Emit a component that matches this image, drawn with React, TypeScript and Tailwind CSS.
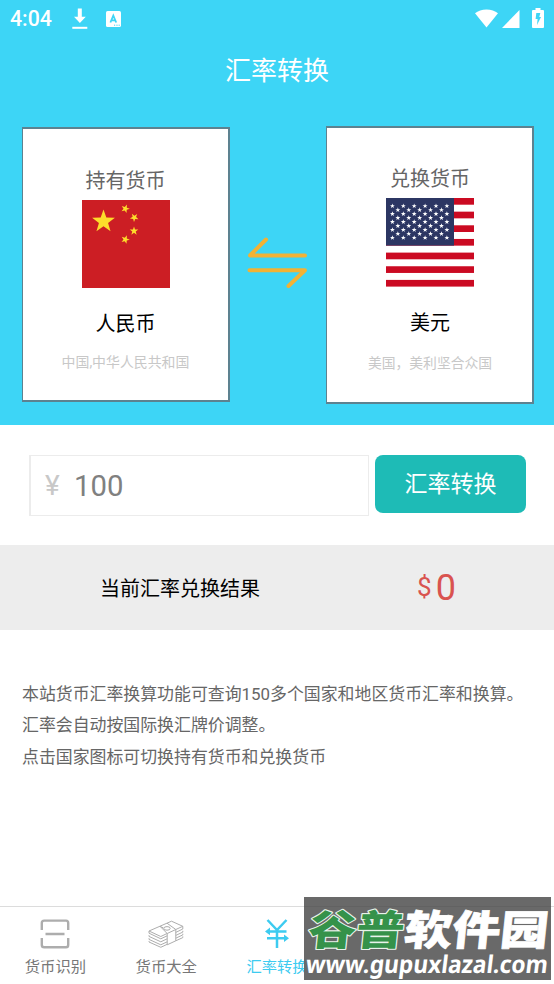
import React from "react";

function starPoints(cx: number, cy: number, r: number, turn = 0) {
  const pts: string[] = [];
  for (let i = 0; i < 10; i++) {
    const rad = i % 2 === 0 ? r : r * 0.4;
    const a = ((-90 + turn + i * 36) * Math.PI) / 180;
    pts.push(`${(cx + rad * Math.cos(a)).toFixed(2)},${(cy + rad * Math.sin(a)).toFixed(2)}`);
  }
  return pts.join(" ");
}

function ChinaFlag() {
  return (
    <svg width="88" height="88" viewBox="0 0 88 88" className="block">
      <rect width="88" height="88" fill="#cc1e24" />
      <g fill="#fddd2b">
        <polygon points={starPoints(21.5, 21.5, 12)} />
        <polygon points={starPoints(43.3, 8.7, 4.5, 20)} />
        <polygon points={starPoints(52.3, 17.5, 4.5, 40)} />
        <polygon points={starPoints(52, 31, 4.5, 0)} />
        <polygon points={starPoints(43.3, 39.5, 4.5, 20)} />
      </g>
    </svg>
  );
}

function UsFlag() {
  const stars: React.ReactNode[] = [];
  for (let row = 0; row < 9; row++) {
    const odd = row % 2 === 1;
    for (let col = 0; col < (odd ? 5 : 6); col++) {
      stars.push(
        <polygon
          key={`${row}-${col}`}
          points={starPoints(6.4 + col * 10.9 + (odd ? 5.45 : 0), 8 + row * 3.97, 2.6)}
        />
      );
    }
  }
  return (
    <svg width="88" height="89" viewBox="0 0 88 89" className="block">
      <rect width="88" height="89" fill="#fff" />
      {[0, 1, 2, 3, 4, 5, 6].map((i) => (
        <rect key={i} y={i * 13.65} width="88" height="6.7" fill="#cb0a22" />
      ))}
      <rect width="68" height="47.6" fill="#2c3663" />
      <g fill="#fff">{stars}</g>
    </svg>
  );
}

function StatusBar() {
  return (
    <div className="flex h-[38px] items-center pl-[10px] pr-[10px] text-white">
      <span className="w-[42px] whitespace-nowrap font-[Roboto] text-[21.3px] font-medium leading-[38px]">4:04</span>
      <svg width="16" height="22" viewBox="0 0 16 22" className="ml-[20px]" fill="#fff">
        <path d="M5.8 0.5h4v8.2h4L7.9 15 2 8.7h3.8z" />
        <rect x="0.3" y="18.8" width="15" height="2" />
      </svg>
      <svg width="15" height="16" viewBox="0 0 15 16" className="ml-[18px]">
        <rect width="15" height="16" rx="1.6" fill="#fff" />
        <path d="M4.4 11.5 7.3 4.5l2.9 7M5.4 9.4h3.8" stroke="#3dd5f6" strokeWidth="1.8" fill="none" />
        <path d="M8 14.2h1.2M10.4 14.2h1.2M12.6 14.2h1.2" stroke="#3dd5f6" strokeWidth="1" />
      </svg>
      <span className="flex-1" />
      <svg width="23" height="19" viewBox="0 0 23 19" fill="#fff" className="relative -top-px">
        <path d="M11.5 18.5 0 4.2C3 1.7 7 .4 11.5.4S20 1.7 23 4.2z" />
      </svg>
      <svg width="18" height="18" viewBox="0 0 18 18" className="ml-[4px]" fill="#fff">
        <path d="M0 18 17.5 0v18z" />
      </svg>
      <svg width="12" height="20" viewBox="0 0 12 20" className="relative -top-px ml-[12px]">
        <path d="M3.5 0h5v2H11q1 0 1 1v16q0 1-1 1H1q-1 0-1-1V3q0-1 1-1h2.5z" fill="#fff" />
        <path d="M4.3 5h4L7.3 9H9l-4 8 .6-6H3.6z" fill="#3dd5f6" />
      </svg>
    </div>
  );
}

function SwapIcon() {
  return (
    <svg width="62" height="56" viewBox="0 0 62 56" fill="none" stroke="#f2b235" strokeWidth="4" strokeLinecap="round" strokeLinejoin="round">
      <path d="M58 20.5H3L19 4.5" />
      <path d="M2.5 35.3H58L41.5 51" />
    </svg>
  );
}

function ScanIcon() {
  return (
    <svg width="30" height="30" viewBox="0 0 30 30" fill="none" stroke="#adadad" strokeWidth="2.4">
      <path d="M1.8 11V4Q1.8 1.6 4.2 1.6H26Q28.2 1.6 28.2 4V11M1.8 19v7q0 2.3 2.4 2.3H26q2.2 0 2.2-2.3V19M5.5 15H24.5" />
    </svg>
  );
}

function MoneyIcon() {
  return (
    <svg width="36" height="28" viewBox="0 0 36 28" fill="none" stroke="#adadad" strokeWidth="1" strokeLinejoin="round">
      <path d="M1 11 23.5 1.2 34.8 6.3 27.8 9.5M19 13.5 12.8 16.5 1 11" />
      <path d="M12 6.3 15.5 8M19 3.2l8.8 6.3V20.8L19.2 24.8V13.5L12 6.3M19.2 13.5 27.8 9.5" />
      <ellipse cx="19" cy="8.4" rx="3.2" ry="1.8" />
      <path d="M1 11v2.2l11.8 5.6 6.4-3M1 15.2v1.2l11.8 5.4 6.4-3M1 18.2v1.2l11.8 5.4 6.4-3M1 21.2v.8l11.8 5.3 6.4-3" />
      <path d="M27.8 12.4 34.8 9V6.3M27.8 15.4l7-3.3v-1.3M27.8 18.2l7-3.3v-1.2M27.8 20.8l7-3.2v-1.2" />
    </svg>
  );
}

function YuanIcon() {
  return (
    <svg width="24" height="30" viewBox="0 0 24 30" fill="none" stroke="#3dcbf0" strokeWidth="2.5">
      <path d="M2.5 1 12 11 21.5 1M12 11v18M3 12.5h18.5M2 19.2h18" />
      <path d="M5 8.6 0 12.5 5 16.2zM19 15.4l5 3.8-5 3.7z" fill="#3dcbf0" stroke="none" />
    </svg>
  );
}

type CardProps = { title: string; name: string; note: string; flag: React.ReactNode; box: string; noteText: string };

function CurrencyCard({ title, name, note, flag, box, noteText }: CardProps) {
  return (
    <div className={`flex w-[208px] flex-col items-center border-[#5d8290] bg-white ${box}`}>
      <div className="text-[20px] leading-[30px] text-[#666]">{title}</div>
      <div className="mt-[4px]">{flag}</div>
      <div className="mt-[21px] text-[20px] leading-[30px] text-black">{name}</div>
      <div className={`leading-[20px] text-[#c8c8c8] ${noteText}`}>{note}</div>
    </div>
  );
}

function Tab({ icon, label, tone }: { icon: React.ReactNode; label: string; tone: string }) {
  return (
    <div className="flex w-[110.8px] flex-col items-center pt-[12px]">
      <div className="flex h-[30px] items-center">{icon}</div>
      <div className={`mt-[6px] whitespace-nowrap text-[15.3px] leading-[24px] ${tone}`}>{label}</div>
    </div>
  );
}

export default function App() {
  return (
    <div className="relative flex h-[984px] w-[554px] flex-col overflow-hidden bg-white font-[Roboto,'Noto_Sans_CJK_SC',sans-serif]">
      <header className="h-[425px] bg-[#3dd5f6]">
        <StatusBar />
        <h1 className="mt-[13px] text-center text-[26px] font-normal leading-[40px] text-white">汇率转换</h1>
        <div className="mt-[35px] flex items-start pl-[22px]">
          <CurrencyCard
            title="持有货币"
            name="人民币"
            note="中国,中华人民共和国"
            flag={<ChinaFlag />}
            box="mt-[1px] h-[275px] border-t-2 border-r-2 border-b-2 border-l pt-[37px]"
            noteText="mt-[13px] text-[13.9px]"
          />
          <div className="flex w-[96px] justify-center pt-[109px]">
            <SwapIcon />
          </div>
          <CurrencyCard
            title="兑换货币"
            name="美元"
            note="美国，美利坚合众国"
            flag={<UsFlag />}
            box="h-[278px] border-t-2 border-r-2 border-b-2 border-l pl-px pt-[36px]"
            noteText="mt-[15px] text-[13.8px]"
          />
        </div>
      </header>

      <section className="flex h-[120px] items-start pl-[29px] pt-[30px]">
        <div className="flex h-[61px] w-[340px] items-center border-t border-r border-b border-l-2 border-[#ececec] pl-[14px]">
          <span className="w-[29px] text-[28px] leading-[40px] text-[#c8c8c8]">¥</span>
          <span className="text-[29.3px] leading-[40px] text-[#808080]">100</span>
        </div>
        <button className="ml-[6px] h-[58px] w-[151px] rounded-[8px] bg-[#1ebbb6] pt-px text-[23px] leading-[57px] text-white">汇率转换</button>
      </section>

      <section className="flex h-[85px] items-center bg-[#ededed] pl-[100px]">
        <span className="w-[317px] pt-[2px] text-[20px] text-black">当前汇率兑换结果</span>
        <span className="text-[26px] text-[#d9534f]">$</span>
        <span className="ml-[4px] text-[36px] text-[#d9534f]">0</span>
      </section>

      <section className="flex-1 whitespace-nowrap pl-[22px] pt-[49px] text-[16.9px] leading-[31.3px] text-[#666]">
        <p>本站货币汇率换算功能可查询150多个国家和地区货币汇率和换算。</p>
        <p>汇率会自动按国际换汇牌价调整。</p>
        <p>点击国家图标可切换持有货币和兑换货币</p>
      </section>

      <nav className="flex h-[78px] border-t border-[#dcdcdc] bg-white">
        <Tab icon={<ScanIcon />} label="货币识别" tone="text-[#777]" />
        <Tab icon={<MoneyIcon />} label="货币大全" tone="text-[#777]" />
        <Tab icon={<YuanIcon />} label="汇率转换" tone="text-[#3dcbf0]" />
      </nav>

      <div className="absolute left-[304px] top-[897px] h-[83px] w-[247px] bg-[#696969]">
        <svg width="247" height="83" viewBox="0 0 247 83" className="block overflow-visible">
          <path d="M0 9.5H247" stroke="#626262" />
          <g
            transform="translate(2 47.5) skewX(-6) scale(1 .86)"
            fontFamily="'Noto Sans CJK SC', sans-serif"
            fontWeight="900"
            fontSize="48"
            strokeLinejoin="round"
          >
            <text x="1" y="0" fill="#35924a" stroke="#e8f3ea" strokeWidth="2.6" paintOrder="stroke">谷普</text>
            <text x="97" y="0" fill="#fff" stroke="#fff" strokeWidth=".8">软件园</text>
          </g>
          <g transform="translate(1 75.5) skewX(-7) scale(1 1.14)">
            <text
              x="0"
              y="0"
              textLength="242"
              lengthAdjust="spacingAndGlyphs"
              fontFamily="'Noto Sans', sans-serif"
              fontWeight="700"
              fontSize="21.5"
              fill="#fff"
            >
              www.gupuxlazal.com
            </text>
          </g>
        </svg>
      </div>
    </div>
  );
}
